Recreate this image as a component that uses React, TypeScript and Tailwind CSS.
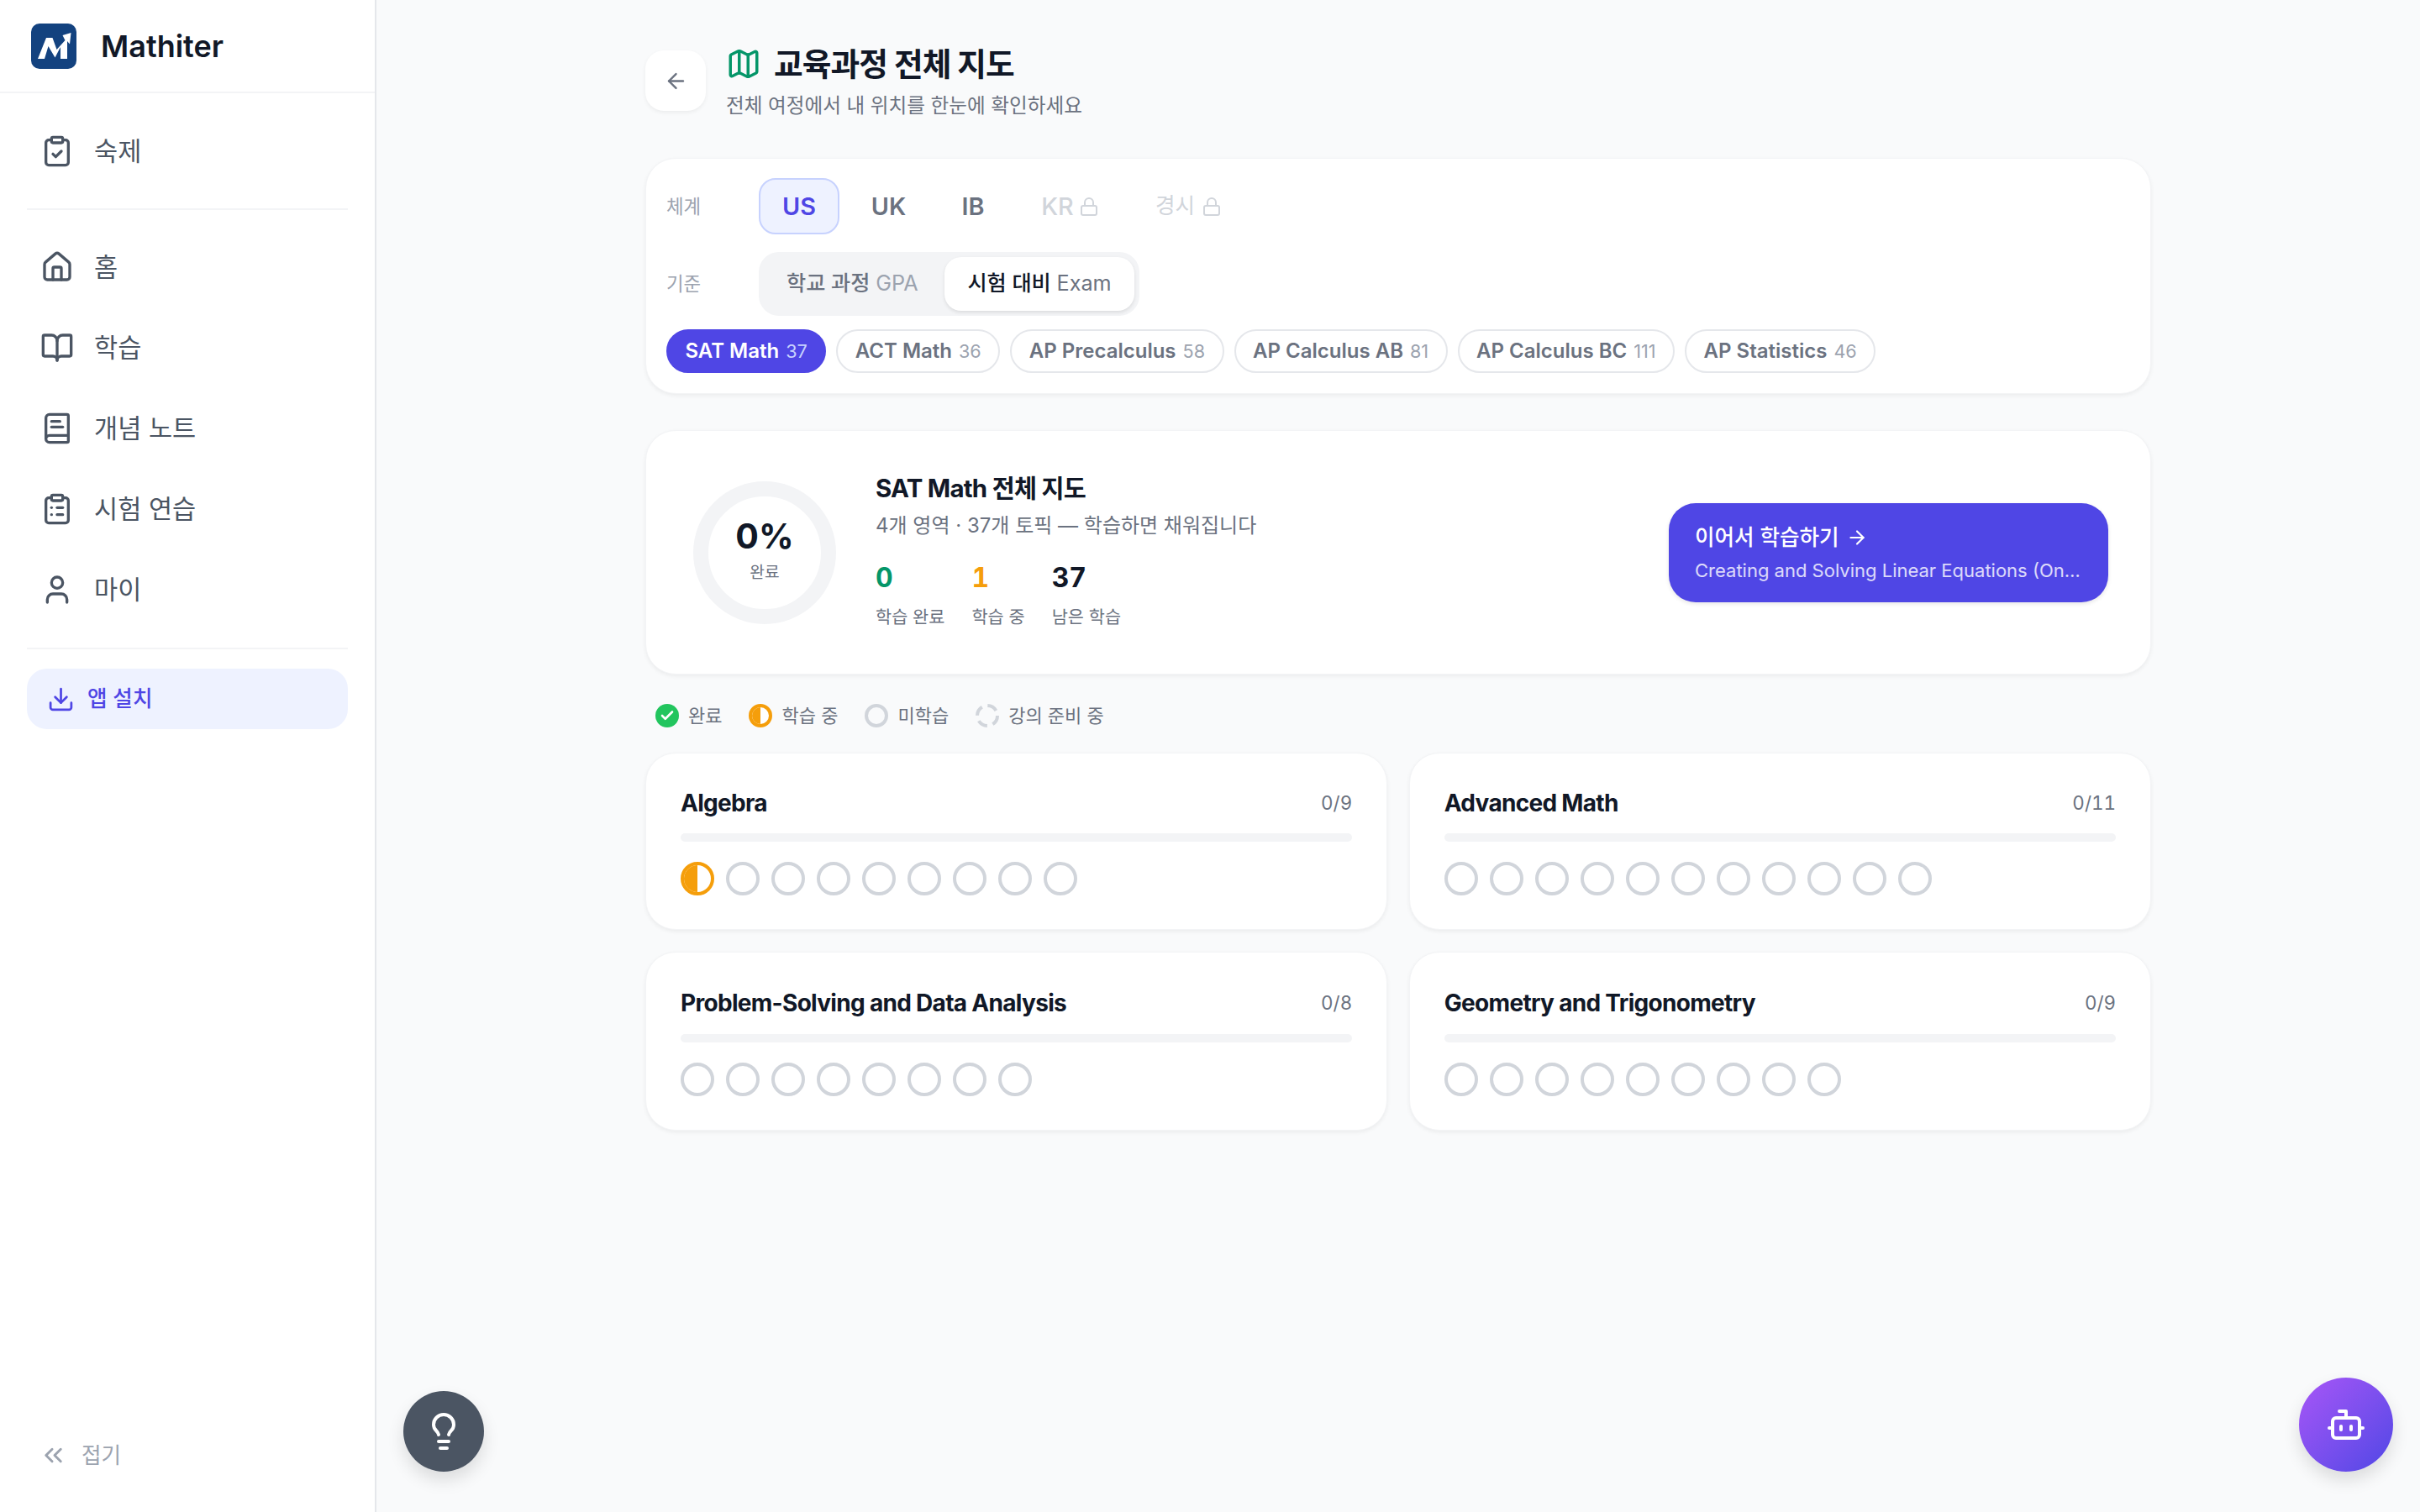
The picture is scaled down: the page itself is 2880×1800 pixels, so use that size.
import {
  ArrowLeft,
  ArrowRight,
  Bot,
  BookOpen,
  BookText,
  Check,
  ChevronsLeft,
  ClipboardCheck,
  ClipboardList,
  Download,
  House,
  Lightbulb,
  Lock,
  Map,
  User,
} from "lucide-react";

const navItems = [
  { label: "홈", icon: House },
  { label: "학습", icon: BookOpen },
  { label: "개념 노트", icon: BookText },
  { label: "시험 연습", icon: ClipboardList },
  { label: "마이", icon: User },
];

const tracks = [
  { name: "SAT Math", count: 37, active: true },
  { name: "ACT Math", count: 36 },
  { name: "AP Precalculus", count: 58 },
  { name: "AP Calculus AB", count: 81 },
  { name: "AP Calculus BC", count: 111 },
  { name: "AP Statistics", count: 46 },
];

const domains = [
  { name: "Algebra", total: 9, started: true },
  { name: "Advanced Math", total: 11 },
  { name: "Problem-Solving and Data Analysis", total: 8 },
  { name: "Geometry and Trigonometry", total: 9 },
];

const Logo = () => (
  <svg viewBox="0 0 54 54" className="h-[54px] w-[54px] shrink-0">
    <rect width="54" height="54" rx="10" fill="#13427f" />
    <path d="M8 42 18 17h7.500l5 14 10-11-3-6 10-3-1.500 13.500-3-3.500V42H35V28l-6.500 12.500L20.500 27 16 42z" fill="#fff" />
  </svg>
);

const HalfDot = ({ size }: { size: string }) => (
  <div className={`${size} shrink-0 overflow-hidden rounded-full border-[4px] border-[#f59e0b] bg-white`}>
    <div className="h-full w-1/2 bg-[#f59e0b]" />
  </div>
);

const Dot = () => <div className="h-[40px] w-[40px] shrink-0 rounded-full border-[4px] border-[#d1d5db]" />;

const Card = ({ className, children }: { className: string; children: React.ReactNode }) => (
  <div className={`rounded-[36px] border border-[#f3f4f6] bg-white shadow-[0_2px_5px_rgba(0,0,0,0.06)] ${className}`}>
    {children}
  </div>
);

export default function App() {
  return (
    <div className="relative flex h-screen w-full overflow-hidden bg-[#f9fafb] font-['Inter','Noto_Sans_CJK_KR',sans-serif]">
      <aside className="flex h-full w-[448px] shrink-0 flex-col border-r-2 border-[#e5e7eb] bg-white">
        <div className="flex h-[111px] items-center gap-[29px] border-b-2 border-[#f3f4f6] pl-[37px]">
          <Logo />
          <span className="text-[36px] font-semibold text-[#111827]">Mathiter</span>
        </div>

        <div className="px-[32px]">
          <div className="mt-[21px] flex h-[96px] items-center gap-[24px] pl-[16px] text-[30.6px] text-[#4b5563]">
            <ClipboardCheck size={40} className="shrink-0" />
            <span>숙제</span>
          </div>
          <div className="mt-[20px] border-t-2 border-[#f3f4f6]" />
          <nav className="mt-[20px] flex flex-col">
            {navItems.map((item) => {
              const Icon = item.icon;
              return (
                <div key={item.label} className="flex h-[96px] items-center gap-[24px] pl-[16px] text-[30.6px] text-[#4b5563]">
                  <Icon size={40} className="shrink-0" />
                  <span>{item.label}</span>
                </div>
              );
            })}
          </nav>
          <div className="mt-[21px] border-t-2 border-[#f3f4f6]" />
          <div className="mt-[23px] flex h-[72px] items-center gap-[15px] rounded-[24px] bg-[#eef2ff] pl-[24px] text-[25.6px] font-medium text-[#4f46e5]">
            <Download size={33} className="shrink-0" />
            <span>앱 설치</span>
          </div>
        </div>

        <div className="mt-auto mb-[48px] flex items-center gap-[16px] pl-[46px] text-[25.6px] text-[#9ca3af]">
          <ChevronsLeft size={35} className="shrink-0" />
          <span>접기</span>
        </div>
      </aside>

      <main className="flex-1 overflow-hidden pt-[60px]">
        <div className="mx-auto w-[1792px]">
          <div className="flex items-start gap-[24px]">
            <button className="flex h-[72px] w-[72px] items-center justify-center rounded-[22px] bg-white text-[#6b7280] shadow-[0_2px_5px_rgba(0,0,0,0.06)]">
              <ArrowLeft size={29} />
            </button>
            <div>
              <div className="flex h-[32px] items-center gap-[15px]">
                <Map size={42} className="text-[#059669]" />
                <h1 className="text-[37.7px] font-bold tracking-tight text-[#111827]">교육과정 전체 지도</h1>
              </div>
              <p className="mt-[16px] text-[23.6px] leading-[36px] text-[#6b7280]">전체 여정에서 내 위치를 한눈에 확인하세요</p>
            </div>
          </div>

          <Card className="mt-[44px] px-[24px] pb-[24px] pt-[23px]">
            <div className="flex items-center">
              <span className="w-[110px] text-[22.4px] text-[#9ca3af]">체계</span>
              <div className="flex items-center gap-[10px] text-[28.8px] font-semibold">
                <div className="flex h-[67px] w-[96px] items-center justify-center rounded-[20px] border-2 border-[#c7d2fe] bg-[#eef2ff] text-[#4f46e5]">US</div>
                <div className="flex h-[67px] w-[97px] items-center justify-center text-[#6b7280]">UK</div>
                <div className="flex h-[67px] w-[84px] items-center justify-center text-[#6b7280]">IB</div>
                <div className="flex h-[67px] w-[127px] items-center justify-center gap-[6px] font-medium text-[#d1d5db]">
                  KR <Lock size={24} />
                </div>
                <div className="flex h-[67px] w-[135px] items-center justify-center gap-[8px] text-[25.6px] font-normal text-[#d1d5db]">
                  경시 <Lock size={24} />
                </div>
              </div>
            </div>

            <div className="mt-[21px] flex items-center">
              <span className="w-[110px] text-[22.4px] text-[#9ca3af]">기준</span>
              <div className="flex h-[76px] w-[453px] items-center rounded-[24px] bg-[#f3f4f6] p-[6px] text-[25.2px] font-medium">
                <div className="flex-1 pl-[27px] text-[#6b7280]">
                  학교 과정 <span className="font-normal text-[#9ca3af]">GPA</span>
                </div>
                <div className="flex h-[64px] w-[226px] items-center justify-center rounded-[20px] bg-white text-[#111827] shadow-[0_2px_4px_rgba(0,0,0,0.1)]">
                  <span>시험 대비 <span className="font-normal text-[#6b7280]">Exam</span></span>
                </div>
              </div>
            </div>

            <div className="mt-[16px] flex items-center gap-[12px]">
              {tracks.map((track) => (
                <div
                  key={track.name}
                  className={
                    track.active
                      ? "flex h-[52px] items-center gap-[8px] rounded-full border-2 border-[#4f46e5] bg-[#4f46e5] px-[20.500px] text-[24px] font-semibold text-white"
                      : "flex h-[52px] items-center gap-[8px] rounded-full border-2 border-[#e5e7eb] bg-white px-[20.500px] text-[24px] font-semibold text-[#6b7280]"
                  }
                >
                  <span>{track.name}</span>
                  <span className={track.active ? "text-[21.6px] font-normal text-[#c7d2fe]" : "text-[21.6px] font-normal text-[#9ca3af]"}>{track.count}</span>
                </div>
              ))}
            </div>
          </Card>

          <Card className="mt-[43px] flex h-[291px] items-center justify-between pl-[56px] pr-[50px]">
            <div className="flex items-center gap-[47px]">
              <div className="flex h-[170px] w-[170px] flex-col items-center justify-center rounded-full border-[18px] border-[#f3f4f6] pb-[10px]">
                <span className="text-[41px] leading-[52px] font-bold text-[#111827]">0%</span>
                <span className="mt-[4px] text-[19.2px] leading-[26px] text-[#6b7280]">완료</span>
              </div>
              <div className="mb-[4px]">
                <h2 className="text-[29.4px] leading-[40px] font-bold tracking-tight text-[#111827]">SAT Math 전체 지도</h2>
                <p className="mt-[6px] text-[24px] leading-[36px] text-[#6b7280]">4개 영역 · 37개 토픽 — 학습하면 채워집니다</p>
                <div className="mt-[22px] flex gap-[32px]">
                  <div>
                    <div className="text-[32px] leading-[44px] font-bold tabular-nums text-[#059669]">0</div>
                    <div className="mt-[10px] text-[20.8px] leading-[30px] text-[#6b7280]">학습 완료</div>
                  </div>
                  <div>
                    <div className="text-[32px] leading-[44px] font-bold tabular-nums text-[#f59e0b]">1</div>
                    <div className="mt-[10px] text-[20.8px] leading-[30px] text-[#6b7280]">학습 중</div>
                  </div>
                  <div>
                    <div className="text-[32px] leading-[44px] font-bold tabular-nums text-[#111827]">37</div>
                    <div className="mt-[10px] text-[20.8px] leading-[30px] text-[#6b7280]">남은 학습</div>
                  </div>
                </div>
              </div>
            </div>
            <div className="flex h-[118px] w-[523px] flex-col justify-center rounded-[32px] bg-[#4f46e5] px-[31px] text-white shadow-[0_2px_5px_rgba(0,0,0,0.1)]">
              <div className="flex items-center gap-[8px] text-[25.6px] leading-[36px] font-medium">
                이어서 학습하기 <ArrowRight size={26} />
              </div>
              <div className="mt-[6px] truncate text-[22px] leading-[30px] text-white/80">Creating and Solving Linear Equations (Online)</div>
            </div>
          </Card>

          <div className="mt-[35px] flex h-[28px] items-center gap-[32px] pl-[12px] text-[22px] text-[#6b7280]">
            <div className="flex items-center gap-[11px]">
              <div className="flex h-[28px] w-[28px] items-center justify-center rounded-full bg-[#22c55e] text-white">
                <Check size={18} strokeWidth={3.5} />
              </div>
              완료
            </div>
            <div className="flex items-center gap-[11px]">
              <HalfDot size="h-[28px] w-[28px]" />
              학습 중
            </div>
            <div className="flex items-center gap-[11px]">
              <div className="h-[28px] w-[28px] rounded-full border-[4px] border-[#d1d5db]" />
              미학습
            </div>
            <div className="flex items-center gap-[11px]">
              <svg viewBox="0 0 28 28" className="h-[28px] w-[28px]">
                <circle cx="14" cy="14" r="12" fill="none" stroke="#d1d5db" strokeWidth="4" strokeDasharray="12 6.85" />
              </svg>
              강의 준비 중
            </div>
          </div>

          <div className="mt-[30px] grid grid-cols-2 gap-[25.6px]">
            {domains.map((domain, index) => (
              <Card key={domain.name} className="px-[41px] pb-[40px] pt-[39px]">
                <div className={index < 2 ? "flex h-[40px] items-center justify-between" : "flex h-[42px] items-center justify-between"}>
                  <h3 className="text-[28px] font-bold tracking-tight text-[#111827]">{domain.name}</h3>
                  <span className="text-[22.4px] tabular-nums text-[#6b7280]">0/{domain.total}</span>
                </div>
                <div className="mt-[16px] h-[10px] rounded-full bg-[#f3f4f6]" />
                <div className="mt-[24px] flex gap-[14px]">
                  {Array.from({ length: domain.total }).map((_, i) =>
                    domain.started && i === 0 ? <HalfDot key={i} size="h-[40px] w-[40px]" /> : <Dot key={i} />
                  )}
                </div>
              </Card>
            ))}
          </div>
        </div>
      </main>

      <button className="absolute left-[480px] top-[1656px] flex h-[96px] w-[96px] items-center justify-center rounded-full bg-[#4b5563] text-white shadow-[0_10px_20px_rgba(0,0,0,0.12)]">
        <Lightbulb size={48} />
      </button>
      <button className="absolute left-[2736px] top-[1640px] flex h-[112px] w-[112px] items-center justify-center rounded-full bg-gradient-to-br from-[#a855f7] to-[#4f46e5] text-white shadow-[0_10px_20px_rgba(0,0,0,0.12)]">
        <Bot size={48} />
      </button>
    </div>
  );
}
